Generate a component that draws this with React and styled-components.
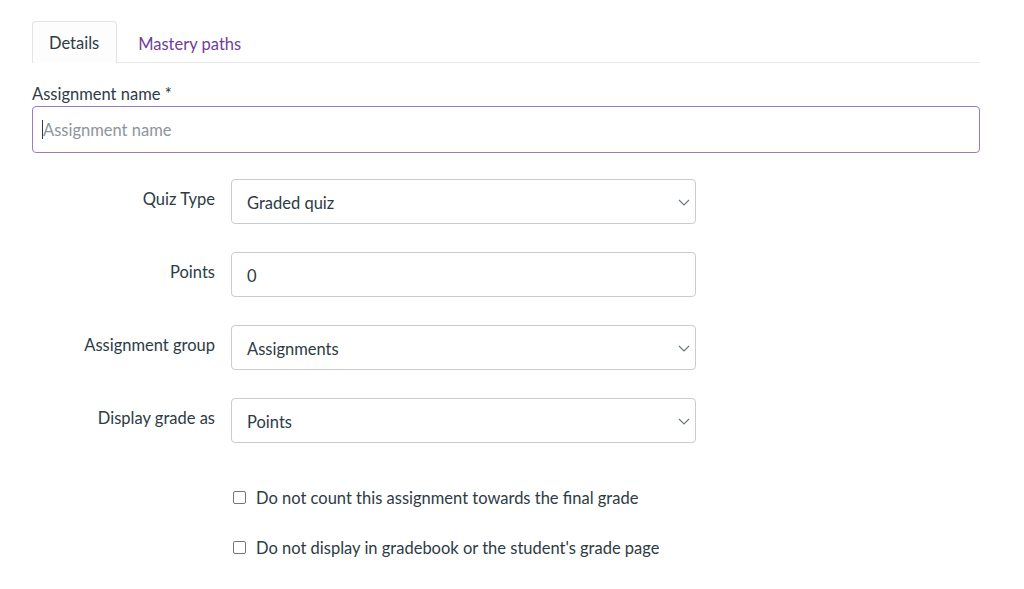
import React from "react";
import styled, { createGlobalStyle } from "styled-components";

const Global = createGlobalStyle`
  html, body { margin: 0; padding: 0; background: #fff; }
  body { font-family: Lato, "Liberation Sans", sans-serif; color: #2d3b45; }
  * { box-sizing: border-box; }
`;

const Page = styled.div`
  padding: 21px 44px 0 32px;
  width: 1024px;
`;

const TabBar = styled.div`
  display: flex;
  align-items: flex-end;
  height: 42px;
  border-bottom: 1px solid #e8e8e8;
`;

const Tab = styled.div`
  height: 42px;
  display: flex;
  align-items: center;
  font-size: 16.5px;
  padding: ${(p) => (p.$active ? "1px 17px 0 16px" : "2px 20px 0 20px")};
  color: ${(p) => (p.$active ? "#2d3b45" : "#6f3d9a")};
  background: ${(p) => (p.$active ? "#fdfdfd" : "transparent")};
  border: 1px solid ${(p) => (p.$active ? "#e3e3e3" : "transparent")};
  border-bottom: none;
  border-radius: 4px 4px 0 0;
  margin-bottom: -1px;
`;

const NameLabel = styled.div`
  font-size: 16.5px;
  line-height: 20px;
  margin-top: 21px;
  margin-bottom: 2px;
`;

const InputWrap = styled.div`
  position: relative;
`;

const NameInput = styled.input`
  display: block;
  width: 100%;
  height: 47px;
  border: 1px solid #9a7bbd;
  border-radius: 4px;
  padding: 1px 10px 0 10px;
  font-family: inherit;
  font-size: 16.5px;
  color: #2d3b45;
  outline: none;
  background: #fff;
  &::placeholder { color: #8d959c; }
`;

const Caret = styled.span`
  position: absolute;
  left: 10px;
  top: 14px;
  width: 1px;
  height: 19px;
  background: #2d3b45;
`;

const FieldGrid = styled.div`
  display: grid;
  grid-template-columns: 183px 465px;
  column-gap: 16px;
  row-gap: 28px;
  margin-top: 26px;
`;

const FieldLabel = styled.div`
  text-align: right;
  font-size: 16.5px;
  line-height: 20px;
  padding-top: 10px;
`;

const Box = styled.div`
  position: relative;
  height: 45px;
  border: 1px solid #c7cdd1;
  border-radius: 4px;
  display: flex;
  align-items: center;
  padding: 3px 15px 0 15px;
  font-size: 16.5px;
  background: #fff;
`;

const Chevron = styled.svg`
  position: absolute;
  right: 5px;
  top: 50%;
  margin-top: -3px;
`;

const Checks = styled.div`
  display: flex;
  flex-direction: column;
  gap: 30px;
  margin-top: 45px;
  margin-left: 201px;
`;

const CheckRow = styled.label`
  display: flex;
  align-items: center;
  gap: 10px;
  font-size: 16.5px;
  line-height: 20px;
`;

const CheckBox = styled.span`
  width: 13px;
  height: 13px;
  border: 1px solid #767676;
  border-radius: 2px;
  background: #fff;
  margin-top: -2px;
`;

const Select = ({ children }) => (
  <Box>
    {children}
    <Chevron width="12" height="7" viewBox="0 0 12 7">
      <path d="M1 1l5 5 5-5" fill="none" stroke="#6b7780" strokeWidth="1.2" />
    </Chevron>
  </Box>
);

export default function App() {
  return (
    <>
      <Global />
      <Page>
        <TabBar>
          <Tab $active>Details</Tab>
          <Tab>Mastery paths</Tab>
        </TabBar>
        <NameLabel>Assignment name *</NameLabel>
        <InputWrap>
          <NameInput placeholder="Assignment name" />
          <Caret />
        </InputWrap>
        <FieldGrid>
          <FieldLabel>Quiz Type</FieldLabel>
          <Select>Graded quiz</Select>
          <FieldLabel>Points</FieldLabel>
          <Box>0</Box>
          <FieldLabel>Assignment group</FieldLabel>
          <Select>Assignments</Select>
          <FieldLabel>Display grade as</FieldLabel>
          <Select>Points</Select>
        </FieldGrid>
        <Checks>
          <CheckRow>
            <CheckBox />
            Do not count this assignment towards the final grade
          </CheckRow>
          <CheckRow>
            <CheckBox />
            Do not display in gradebook or the student's grade page
          </CheckRow>
        </Checks>
      </Page>
    </>
  );
}
